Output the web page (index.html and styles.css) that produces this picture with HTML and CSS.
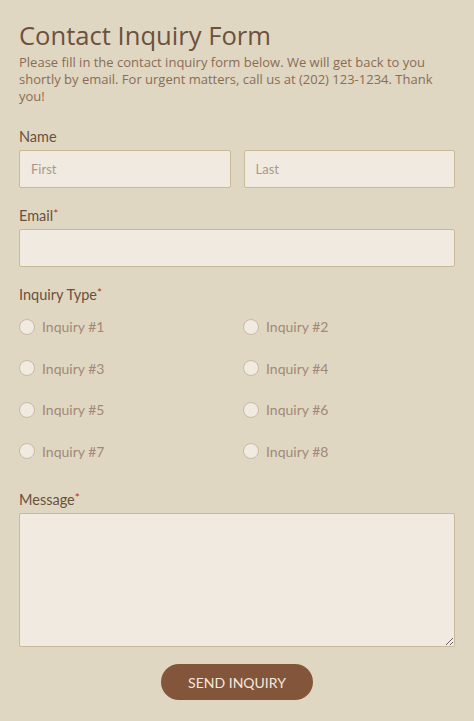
FILE: index.html
```html
<!DOCTYPE html>
<html lang="en">
<head>
    <meta charset="UTF-8">
    <meta name="viewport" content="width=device-width, initial-scale=1.0">
    <title>Contact Inquiry Form</title>
<link rel="stylesheet" href="styles.css">
</head>
<body>
    <form class="inquiry-form">
        <h1 class="form-title">Contact Inquiry Form</h1>
        <p class="form-intro">Please fill in the contact inquiry form below. We will get back to you shortly by email. For urgent matters, call us at (202) 123-1234. Thank you!</p>

        <div class="field field-name">
            <label class="field-label">Name</label>
            <div class="name-row">
                <input type="text" class="text-input" placeholder="First">
                <input type="text" class="text-input" placeholder="Last">
            </div>
        </div>

        <div class="field">
            <label class="field-label">Email<span class="req">*</span></label>
            <input type="email" class="text-input">
        </div>

        <div class="field">
            <label class="field-label">Inquiry Type<span class="req">*</span></label>
            <div class="radio-grid">
                <label class="radio-item"><span class="radio-dot"></span>Inquiry #1</label>
                <label class="radio-item"><span class="radio-dot"></span>Inquiry #2</label>
                <label class="radio-item"><span class="radio-dot"></span>Inquiry #3</label>
                <label class="radio-item"><span class="radio-dot"></span>Inquiry #4</label>
                <label class="radio-item"><span class="radio-dot"></span>Inquiry #5</label>
                <label class="radio-item"><span class="radio-dot"></span>Inquiry #6</label>
                <label class="radio-item"><span class="radio-dot"></span>Inquiry #7</label>
                <label class="radio-item"><span class="radio-dot"></span>Inquiry #8</label>
            </div>
        </div>

        <div class="field field-message">
            <label class="field-label">Message<span class="req">*</span></label>
            <textarea class="text-area"></textarea>
        </div>

        <div class="submit-row">
            <button type="button" class="send-btn">SEND INQUIRY</button>
        </div>
    </form>
</body>
</html>
```

FILE: styles.css
```css
body{
    margin: 0;
    background-color: #e0d7c2;
}
.inquiry-form{
    padding: 19px 19px 20px 19px;
}
.form-title{
    margin: 0 0 1px 0;
    font-family: "Open Sans", sans-serif;
    font-weight: 400;
    font-size: 25.6px;
    line-height: 34px;
    color: #6c523e;
}
.form-intro{
    margin: 0;
    font-family: "Open Sans", sans-serif;
    font-size: 13px;
    line-height: 17px;
    color: #8a6c56;
}
.field{
    margin-top: 17px;
}
.field-name{
    margin-top: 23px;
}
.field-label{
    display: block;
    font-family: Lato, sans-serif;
    font-size: 14.5px;
    line-height: 18px;
    color: #6b503c;
    margin-bottom: 4px;
}
.req{
    color: #c0302a;
    font-size: 12px;
    vertical-align: 3px;
}
.name-row{
    display: flex;
    gap: 13px;
}
.text-input{
    display: block;
    box-sizing: border-box;
    width: 100%;
    height: 38px;
    padding: 0 11px;
    border: 1px solid #c9b999;
    border-radius: 2px;
    background-color: #f1eae0;
    font-family: Lato, sans-serif;
    font-size: 13px;
    color: #6b503c;
}
.text-input::placeholder{
    color: #a89988;
}
.radio-grid{
    display: grid;
    grid-template-columns: 224px 1fr;
    grid-auto-rows: 41.5px;
    margin-top: -2px;
}
.radio-item{
    display: flex;
    align-items: center;
    gap: 7px;
    font-family: Lato, sans-serif;
    font-size: 14px;
    color: #a08976;
}
.radio-dot{
    box-sizing: border-box;
    width: 16px;
    height: 16px;
    border-radius: 50%;
    border: 1px solid #c7baa4;
    background-color: #f1eae0;
}
.field-message{
    margin-top: 17px;
}
.text-area{
    display: block;
    box-sizing: border-box;
    width: 100%;
    height: 134px;
    border: 1px solid #c9b999;
    border-radius: 2px;
    background-color: #f1eae0;
    resize: vertical;
}
.submit-row{
    display: flex;
    justify-content: center;
    margin-top: 17px;
}
.send-btn{
    width: 152px;
    height: 36px;
    border: none;
    border-radius: 18px;
    background-color: #83553a;
    color: #f4e9dd;
    font-family: Lato, sans-serif;
    font-size: 14px;
    cursor: pointer;
}
```
